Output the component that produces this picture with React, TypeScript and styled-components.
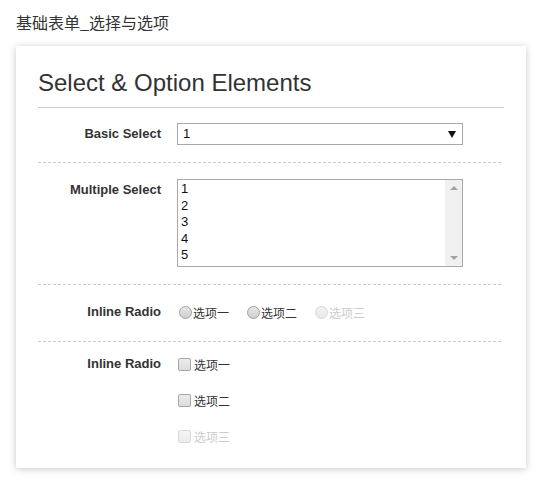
import React from 'react';
import styled, { createGlobalStyle } from 'styled-components';

const GlobalStyle = createGlobalStyle`
  body {
    margin: 0;
    background: #fff;
    font-family: "Liberation Sans", Arial, "Noto Sans CJK SC", sans-serif;
    color: #333;
  }
`;

const Page = styled.div`
  padding: 12px 13px 12px 16px;
`;

const PageTitle = styled.div`
  font-family: "Noto Sans CJK SC", sans-serif;
  font-size: 16px;
  line-height: 20px;
  color: #333;
  margin-bottom: 14px;
`;

const Card = styled.div`
  width: 510px;
  box-sizing: border-box;
  background: #fff;
  padding: 22px 22px 21px;
  box-shadow: 0 1px 7px rgba(0, 0, 0, 0.22);
`;

const Heading = styled.h2`
  margin: 0;
  font-size: 24px;
  font-weight: normal;
  line-height: 30px;
  color: #333;
  padding-bottom: 9px;
  border-bottom: 1px solid #ccc;
`;

const Row = styled.div<{ $top: number; $bottom: number; $last?: boolean }>`
  display: flex;
  align-items: flex-start;
  margin-right: 3px;
  padding: ${p => p.$top}px 0 ${p => p.$bottom}px;
  border-bottom: ${p => (p.$last ? 'none' : '1px dashed #ccc')};
`;

const Label = styled.div<{ $line?: number }>`
  width: 123px;
  flex-shrink: 0;
  text-align: right;
  padding-right: 16px;
  font-size: 13px;
  font-weight: bold;
  line-height: ${p => p.$line ?? 22}px;
  color: #333;
`;

const SelectBox = styled.div`
  position: relative;
  width: 286px;
  height: 22px;
  box-sizing: border-box;
  border: 1px solid #a9a9a9;
  font-size: 13px;
  line-height: 20px;
  padding-left: 5px;
  color: #111;
`;

const Arrow = styled.span`
  position: absolute;
  right: 6px;
  top: 7px;
  width: 0;
  height: 0;
  border-left: 4px solid transparent;
  border-right: 4px solid transparent;
  border-top: 7px solid #111;
`;

const ListBox = styled.div`
  display: flex;
  width: 286px;
  height: 88px;
  box-sizing: border-box;
  border: 1px solid #a9a9a9;
`;

const Options = styled.div`
  flex: 1;
  padding: 1px 0 0 3px;
  font-size: 13px;
  line-height: 16.6px;
  color: #111;
`;

const Scrollbar = styled.div`
  width: 17px;
  background: #f0f0f0;
  display: flex;
  flex-direction: column;
  justify-content: space-between;
  align-items: center;
  padding: 6px 0;
  box-sizing: border-box;
`;

const Tri = styled.span<{ $up?: boolean }>`
  width: 0;
  height: 0;
  border-left: 4px solid transparent;
  border-right: 4px solid transparent;
  ${p => (p.$up ? 'border-bottom: 4px solid #a3a3a3;' : 'border-top: 4px solid #a3a3a3;')}
`;

const RadioGroup = styled.div`
  display: flex;
  align-items: center;
  height: 24px;
  gap: 18px;
  padding-left: 2px;
`;

const CheckGroup = styled.div`
  display: flex;
  flex-direction: column;
  gap: 14px;
  padding-left: 1px;
`;

const Option = styled.label<{ $disabled?: boolean }>`
  display: flex;
  align-items: center;
  height: 22px;
  font-family: "Noto Sans CJK SC", sans-serif;
  font-size: 12px;
  color: ${p => (p.$disabled ? '#ccc' : '#333')};
`;

const RadioDot = styled.span<{ $disabled?: boolean }>`
  width: 11px;
  height: 11px;
  border-radius: 50%;
  border: 1px solid ${p => (p.$disabled ? '#d8d8d8' : '#a0a0a0')};
  background: ${p =>
    p.$disabled
      ? 'linear-gradient(#f2f2f2, #e8e8e8)'
      : 'linear-gradient(#e6e6e6, #cfcfcf)'};
  margin-right: 1px;
`;

const CheckBox = styled.span<{ $disabled?: boolean }>`
  width: 11px;
  height: 11px;
  border-radius: 2px;
  border: 1px solid ${p => (p.$disabled ? '#d8d8d8' : '#a6a6a6')};
  background: ${p =>
    p.$disabled
      ? 'linear-gradient(#f4f4f4, #ececec)'
      : 'linear-gradient(#ececec, #dcdcdc)'};
  margin-right: 3px;
`;

const radios = [
  { text: '选项一', disabled: false },
  { text: '选项二', disabled: false },
  { text: '选项三', disabled: true },
];

const App: React.FC = () => {
  return (
    <>
      <GlobalStyle />
      <Page>
        <PageTitle>基础表单_选择与选项</PageTitle>
        <Card>
          <Heading>Select &amp; Option Elements</Heading>

          <Row $top={15} $bottom={17}>
            <Label>Basic Select</Label>
            <SelectBox>
              1
              <Arrow />
            </SelectBox>
          </Row>

          <Row $top={16} $bottom={17}>
            <Label>Multiple Select</Label>
            <ListBox>
              <Options>
                {[1, 2, 3, 4, 5].map(n => (
                  <div key={n}>{n}</div>
                ))}
              </Options>
              <Scrollbar>
                <Tri $up />
                <Tri />
              </Scrollbar>
            </ListBox>
          </Row>

          <Row $top={15} $bottom={17}>
            <Label $line={24}>Inline Radio</Label>
            <RadioGroup>
              {radios.map(r => (
                <Option key={r.text} $disabled={r.disabled}>
                  <RadioDot $disabled={r.disabled} />
                  {r.text}
                </Option>
              ))}
            </RadioGroup>
          </Row>

          <Row $top={11} $bottom={0} $last>
            <Label>Inline Radio</Label>
            <CheckGroup>
              {radios.map(r => (
                <Option key={r.text} $disabled={r.disabled}>
                  <CheckBox $disabled={r.disabled} />
                  {r.text}
                </Option>
              ))}
            </CheckGroup>
          </Row>
        </Card>
      </Page>
    </>
  );
};

export default App;
